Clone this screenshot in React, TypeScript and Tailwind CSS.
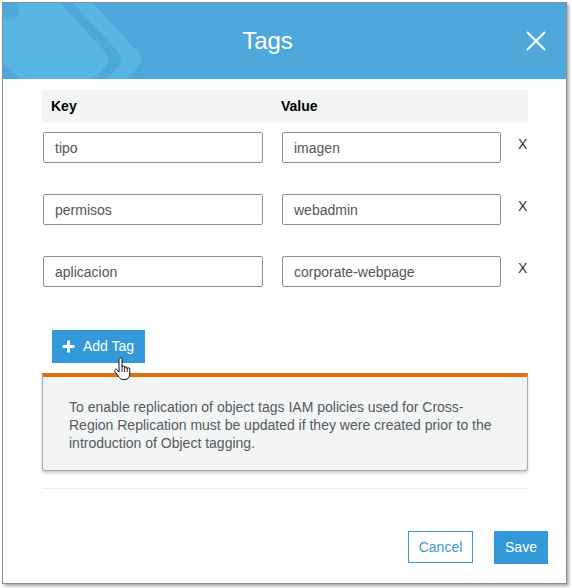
import { useState } from "react";

const FONT = { fontFamily: '"Liberation Sans", Arial, sans-serif' };

interface Tag {
  key: string;
  value: string;
}

function HeaderArt() {
  return (
    <svg
      className="absolute inset-0 pointer-events-none"
      width="562"
      height="76"
      viewBox="0 0 562 76"
    >
      <path
        d="M0 0 L57 0 L103 50 Q107 57 103 63 L90 76 L17 76 L0 59 Z"
        fill="#57b6e4"
      />
      <path
        d="M70 0 L90 0 L136 50 Q140 57 136 63 L124 76 L104 76 L116 63 Q120 57 116 50 Z"
        fill="#57b6e4"
      />
      <circle cx="7" cy="7" r="10" fill="#4eaadd" />
    </svg>
  );
}

function HandCursor() {
  return (
    <svg width="20" height="24" viewBox="0 0 20 24" className="absolute left-[61px] top-[27px]">
      <path
        d="M6 2.5C6 1.7 6.7 1 7.5 1S9 1.7 9 2.5V10C9 9.3 9.6 8.8 10.3 8.8S11.6 9.3 11.6 10V11C11.6 10.3 12.2 9.8 12.9 9.8S14.2 10.3 14.2 11V12C14.2 11.3 14.8 10.8 15.5 10.8S16.8 11.3 16.8 12V17C16.8 20 15 22.5 12 22.5H10.2C7.7 22.5 6.6 21 5.2 19L1.9 14.4C1.4 13.7 1.6 12.8 2.3 12.4S3.9 12.2 4.4 12.9L6 15Z"
        fill="#fff"
        stroke="#111"
        strokeWidth="1"
        strokeLinejoin="round"
      />
      <path d="M9 10V15M11.6 11V15M14.2 12V15" stroke="#111" strokeWidth="0.9" />
    </svg>
  );
}

export default function App() {
  const [tags, setTags] = useState<Tag[]>([
    { key: "tipo", value: "imagen" },
    { key: "permisos", value: "webadmin" },
    { key: "aplicacion", value: "corporate-webpage" },
  ]);

  const update = (i: number, field: keyof Tag, v: string) =>
    setTags((t) => t.map((tag, j) => (j === i ? { ...tag, [field]: v } : tag)));

  return (
    <div className="min-h-[588px] bg-white pl-[2px] pt-[2px]" style={FONT}>
      <div className="w-[565px] h-[582px] border border-[#8c8c8c] bg-white shadow-[2px_2px_3px_rgba(0,0,0,0.35)] flex flex-col">
        <div className="relative flex items-center h-[76px] bg-[#4ea8dc] overflow-hidden shrink-0">
          <HeaderArt />
          <h2 className="relative flex-1 text-center text-[24px] text-white pl-[6px]">Tags</h2>
          <button className="relative w-[20px] h-[20px] mr-[20px]">
            <svg width="20" height="20" viewBox="0 0 20 20">
              <path d="M1 1L19 19M19 1L1 19" stroke="#fff" strokeWidth="2" />
            </svg>
          </button>
        </div>

        <div className="pl-[39px] pr-[38px] pt-[11px] flex-1 flex flex-col">
          <div className="flex items-center h-[33px] bg-[#f3f4f4] text-[14px] font-bold text-black">
            <span className="w-[239px] pl-[9px]">Key</span>
            <span>Value</span>
          </div>

          <div className="flex flex-col gap-[31px] mt-[9px]">
            {tags.map((tag, i) => (
              <div key={i} className="flex items-center">
                <input
                  value={tag.key}
                  onChange={(e) => update(i, "key", e.target.value)}
                  className="ml-[1px] w-[220px] h-[31px] border border-[#8f8f8f] rounded-[2px] px-[11px] text-[14px] text-[#555] outline-none"
                  style={FONT}
                />
                <input
                  value={tag.value}
                  onChange={(e) => update(i, "value", e.target.value)}
                  className="ml-[19px] w-[219px] h-[31px] border border-[#8f8f8f] rounded-[2px] px-[11px] text-[14px] text-[#555] outline-none"
                  style={FONT}
                />
                <button
                  onClick={() => setTags((t) => t.filter((_, j) => j !== i))}
                  className="ml-[17px] -mt-[6px] text-[14px] text-[#333]"
                >
                  X
                </button>
              </div>
            ))}
          </div>

          <div className="relative mt-[43px] ml-[10px] w-fit">
            <button
              onClick={() => setTags((t) => [...t, { key: "", value: "" }])}
              className="flex items-center gap-[8px] h-[33px] w-[93px] pl-[10px] bg-[#3399d8] text-white text-[14px]"
            >
              <svg width="13" height="13" viewBox="0 0 13 13">
                <path d="M6.5 0.5V12.5M0.5 6.5H12.5" stroke="#fff" strokeWidth="3" />
              </svg>
              Add Tag
            </button>
            <HandCursor />
          </div>

          <div className="mt-[10px] border-t-[4px] border-t-[#e8700c] border-x border-b border-[#a8abab] rounded-b-[3px] bg-[#f3f4f4] shadow-[0_2px_3px_rgba(0,0,0,0.2)] pl-[26px] pr-[30px] pt-[21px] pb-[18px] text-[14px] leading-[18px] text-[#545b64]">
            To enable replication of object tags IAM policies used for Cross-Region Replication must be
            updated if they were created prior to the introduction of Object tagging.
          </div>

          <div className="mt-[17px] border-t border-[#eaeded]" />

          <div className="flex justify-end gap-[21px] mt-[42px] -mr-[20px]">
            <button className="w-[65px] h-[32px] border border-[#3399d8] text-[#3a96d6] text-[14px]">
              Cancel
            </button>
            <button className="w-[54px] h-[33px] bg-[#3399d8] text-white text-[14px]">Save</button>
          </div>
        </div>
      </div>
    </div>
  );
}
